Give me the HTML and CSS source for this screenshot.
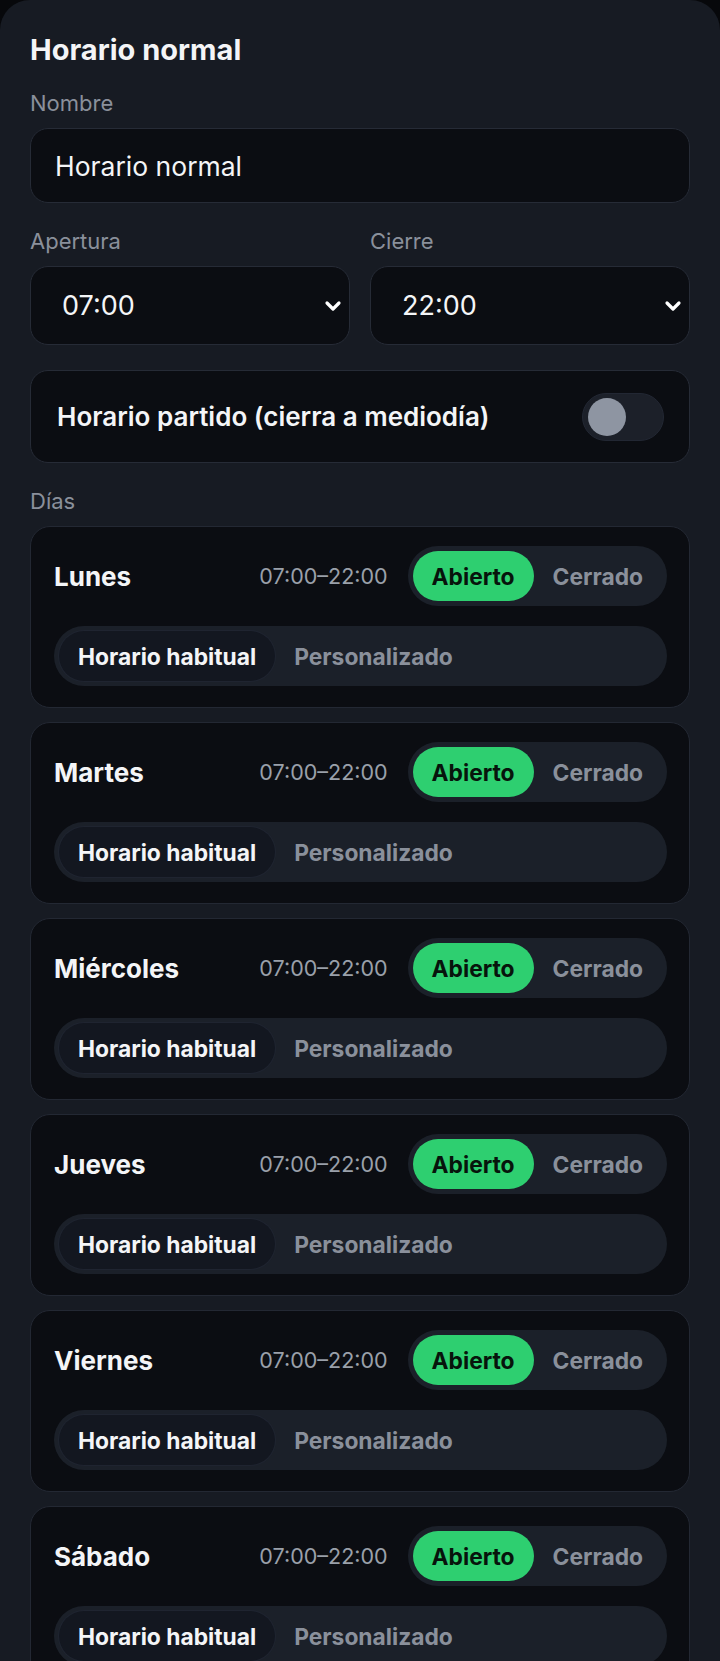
FILE: index.html
```html
<!DOCTYPE html>
<html lang="es">

<head>
    <meta charset="UTF-8">
    <title>Horario normal</title>
    <link rel="stylesheet" href="styles.css">
</head>

<body>
    <div class="sheet">
        <h1 class="sheet-title">Horario normal</h1>

        <!-- Nombre -->
        <label class="field-label">Nombre</label>
        <div class="text-box">Horario normal</div>

        <!-- Apertura / Cierre -->
        <div class="time-grid">
            <div class="time-col">
                <label class="field-label">Apertura</label>
                <div class="select-box">
                    <span>07:00</span>
                    <svg class="chevron" width="18" height="12" viewBox="0 0 18 12"><path d="M3 3 L9 9 L15 3" fill="none" stroke="#fff" stroke-width="3.2" stroke-linecap="round" stroke-linejoin="round"/></svg>
                </div>
            </div>
            <div class="time-col">
                <label class="field-label">Cierre</label>
                <div class="select-box">
                    <span>22:00</span>
                    <svg class="chevron" width="18" height="12" viewBox="0 0 18 12"><path d="M3 3 L9 9 L15 3" fill="none" stroke="#fff" stroke-width="3.2" stroke-linecap="round" stroke-linejoin="round"/></svg>
                </div>
            </div>
        </div>

        <!-- Horario partido -->
        <div class="split-box">
            <span class="split-text">Horario partido (cierra a mediodía)</span>
            <div class="switch"><div class="switch-knob"></div></div>
        </div>

        <label class="field-label days-label">Días</label>

        <div class="day-list">
            <div class="day-card">
                <div class="day-top">
                    <span class="day-name">Lunes</span>
                    <span class="day-hours">07:00–22:00</span>
                    <div class="seg">
                        <span class="seg-item open">Abierto</span>
                        <span class="seg-item">Cerrado</span>
                    </div>
                </div>
                <div class="seg seg-wide">
                    <span class="seg-item current">Horario habitual</span>
                    <span class="seg-item">Personalizado</span>
                </div>
            </div>

            <div class="day-card">
                <div class="day-top">
                    <span class="day-name">Martes</span>
                    <span class="day-hours">07:00–22:00</span>
                    <div class="seg">
                        <span class="seg-item open">Abierto</span>
                        <span class="seg-item">Cerrado</span>
                    </div>
                </div>
                <div class="seg seg-wide">
                    <span class="seg-item current">Horario habitual</span>
                    <span class="seg-item">Personalizado</span>
                </div>
            </div>

            <div class="day-card">
                <div class="day-top">
                    <span class="day-name">Miércoles</span>
                    <span class="day-hours">07:00–22:00</span>
                    <div class="seg">
                        <span class="seg-item open">Abierto</span>
                        <span class="seg-item">Cerrado</span>
                    </div>
                </div>
                <div class="seg seg-wide">
                    <span class="seg-item current">Horario habitual</span>
                    <span class="seg-item">Personalizado</span>
                </div>
            </div>

            <div class="day-card">
                <div class="day-top">
                    <span class="day-name">Jueves</span>
                    <span class="day-hours">07:00–22:00</span>
                    <div class="seg">
                        <span class="seg-item open">Abierto</span>
                        <span class="seg-item">Cerrado</span>
                    </div>
                </div>
                <div class="seg seg-wide">
                    <span class="seg-item current">Horario habitual</span>
                    <span class="seg-item">Personalizado</span>
                </div>
            </div>

            <div class="day-card">
                <div class="day-top">
                    <span class="day-name">Viernes</span>
                    <span class="day-hours">07:00–22:00</span>
                    <div class="seg">
                        <span class="seg-item open">Abierto</span>
                        <span class="seg-item">Cerrado</span>
                    </div>
                </div>
                <div class="seg seg-wide">
                    <span class="seg-item current">Horario habitual</span>
                    <span class="seg-item">Personalizado</span>
                </div>
            </div>

            <div class="day-card">
                <div class="day-top">
                    <span class="day-name">Sábado</span>
                    <span class="day-hours">07:00–22:00</span>
                    <div class="seg">
                        <span class="seg-item open">Abierto</span>
                        <span class="seg-item">Cerrado</span>
                    </div>
                </div>
                <div class="seg seg-wide">
                    <span class="seg-item current">Horario habitual</span>
                    <span class="seg-item">Personalizado</span>
                </div>
            </div>
        </div>
    </div>
</body>

</html>
```

FILE: styles.css
```css
/* Base */
body {
    margin: 0;
    padding: 0;
    background: #07080b;
    color: #f4f5f7;
    font-family: Inter, "Noto Sans", sans-serif;
    overflow: hidden;
}

.sheet {
    background: #171b23;
    border-radius: 30px 30px 0 0;
    padding: 32px 30px 0 30px;
    height: 1661px;
    box-sizing: border-box;
    overflow: hidden;
}

.sheet-title {
    margin: 0;
    font-size: 29px;
    line-height: 36px;
    font-weight: 700;
}

.field-label {
    display: block;
    margin-top: 21px;
    font-size: 22px;
    line-height: 28px;
    color: #8a909b;
}

/* Inputs */
.text-box {
    margin-top: 11px;
    height: 75px;
    box-sizing: border-box;
    padding: 0 24px;
    display: flex;
    align-items: center;
    background: #0b0d12;
    border: 1px solid #262b36;
    border-radius: 18px;
    font-size: 26.5px;
}

.time-grid {
    display: grid;
    grid-template-columns: 1fr 1fr;
    gap: 20px;
    margin-top: 24px;
}

.time-grid .field-label {
    margin-top: 0;
}

.select-box {
    margin-top: 11px;
    height: 79px;
    box-sizing: border-box;
    padding: 0 7px 0 31px;
    display: flex;
    align-items: center;
    justify-content: space-between;
    background: #0b0d12;
    border: 1px solid #262b36;
    border-radius: 18px;
    font-size: 27px;
}

.chevron {
    display: block;
}

/* Split schedule switch */
.split-box {
    margin-top: 25px;
    height: 93px;
    box-sizing: border-box;
    padding: 0 25px 0 26px;
    display: flex;
    align-items: center;
    justify-content: space-between;
    background: #0b0d12;
    border: 1px solid #262b36;
    border-radius: 18px;
}

.split-text {
    font-size: 26px;
    font-weight: 600;
}

.switch {
    width: 82px;
    height: 48px;
    box-sizing: border-box;
    padding: 4px 5px;
    background: #1c2029;
    border: 1px solid #222733;
    border-radius: 24px;
}

.switch-knob {
    width: 38px;
    height: 38px;
    border-radius: 50%;
    background: #8e95a2;
}

.days-label {
    margin-top: 24px;
}

/* Day cards */
.day-list {
    display: flex;
    flex-direction: column;
    gap: 14px;
    margin-top: 11px;
}

.day-card {
    background: #0b0d12;
    border: 1px solid #232833;
    border-radius: 20px;
    padding: 19px 22px 21px 23px;
    display: flex;
    flex-direction: column;
    gap: 20px;
}

.day-top {
    display: flex;
    align-items: center;
    gap: 20px;
}

.day-name {
    flex: 1;
    font-size: 26px;
    font-weight: 700;
}

.day-hours {
    font-size: 21.5px;
    color: #9aa0aa;
}

.seg {
    display: flex;
    height: 60px;
    box-sizing: border-box;
    padding: 5px;
    background: #1b2029;
    border-radius: 30px;
}

.seg-item {
    display: flex;
    align-items: center;
    padding: 0 19px;
    border-radius: 25px;
    font-size: 22.8px;
    font-weight: 700;
    color: #8a909b;
}

.seg-item.open {
    background: #2ecf70;
    color: #07140c;
}

.seg-item.current {
    background: #131720;
    color: #f4f5f7;
    box-shadow: 0 0 0 1px #1f2430;
}
```
